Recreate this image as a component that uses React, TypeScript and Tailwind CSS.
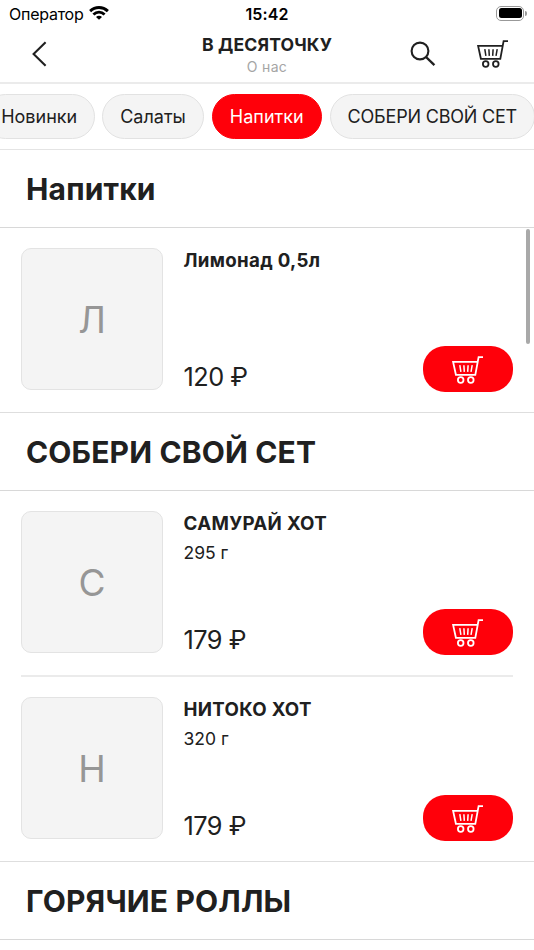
import { clsx } from 'clsx';

type Product = { name: string; weight?: string; price: string };
type Section = { title: string; products: Product[] };

const categories = ['Новинки', 'Салаты', 'Напитки', 'СОБЕРИ СВОЙ СЕТ'];

const sections: Section[] = [
  { title: 'Напитки', products: [{ name: 'Лимонад 0,5л', price: '120 ₽' }] },
  {
    title: 'СОБЕРИ СВОЙ СЕТ',
    products: [
      { name: 'САМУРАЙ ХОТ', weight: '295 г', price: '179 ₽' },
      { name: 'НИТОКО ХОТ', weight: '320 г', price: '179 ₽' },
    ],
  },
  { title: 'ГОРЯЧИЕ РОЛЛЫ', products: [] },
];

function CartIcon({ className }: { className?: string }) {
  return (
    <svg className={className} viewBox="0 0 32 28" fill="none" stroke="currentColor" strokeWidth="1.8">
      <path d="M31 1.2H26.6L23.3 18.8H3.9L1.1 5.9H25.6" />
      <path d="M7.8 9.2L8.9 15.9M11.9 9.2L12.3 15.9M16.1 9.2L15.7 15.9M20.2 9.2L19 15.9" strokeWidth="1.5" />
      <circle cx="8.7" cy="24" r="2.8" />
      <circle cx="18.8" cy="24" r="2.8" />
    </svg>
  );
}

function StatusBar() {
  return (
    <div className="grid h-[28px] grid-cols-3 items-center text-[16px] text-black">
      <div className="flex items-center gap-[6px] pl-[9px]">
        <span className="tracking-[-0.25px]">Оператор</span>
        <svg className="h-[14px] w-5 -translate-y-px" viewBox="0 0 20 14" fill="none" stroke="black" strokeWidth="2.9">
          <path d="M1.1 5.1C6.2.3 13.8.3 18.9 5.1" />
          <path d="M4.4 8.5C7.7 5.5 12.3 5.5 15.6 8.5" />
          <path d="M10 13.8L7 10.9C8.7 9.4 11.3 9.4 13 10.9Z" fill="black" stroke="none" />
        </svg>
      </div>
      <span className="text-center font-semibold tracking-[0.1px]">15:42</span>
      <div className="flex items-center justify-end pr-[7px]">
        <div className="-mt-[2px] h-[15px] w-[28px] rounded-[5px] border border-[#999] p-[1.5px]">
          <div className="h-full rounded-[2.5px] bg-black" />
        </div>
        <div className="-mt-[2px] ml-px h-[5px] w-[2px] rounded-r-full bg-[#999]" />
      </div>
    </div>
  );
}

function Header() {
  return (
    <header className="grid h-[56px] grid-cols-3 border-b-2 border-[#ebebeb]">
      <div className="pt-[13px] pl-[31px]">
        <svg className="h-[26px] w-4" viewBox="0 0 16 26" fill="none" stroke="#202020" strokeWidth="2.1">
          <path d="M14.6 1.2L2.6 13L14.6 24.8" />
        </svg>
      </div>
      <div className="flex flex-col items-center whitespace-nowrap">
        <h1 className="mt-[6px] text-[17.6px] leading-[22px] font-bold tracking-[0.15px]">В ДЕСЯТОЧКУ</h1>
        <span className="mt-[2px] text-[14px] leading-[18px] tracking-[0.3px] text-[#a5a5a5]">О нас</span>
      </div>
      <div className="flex justify-end gap-[41px] pt-[12px] pr-[25px]">
        <svg className="mt-px h-[26px] w-[26px]" viewBox="0 0 26 26" fill="none" stroke="#202020" strokeWidth="2.1">
          <circle cx="10" cy="10" r="8.4" />
          <path d="M16 16L24.4 24.2" strokeWidth="2.4" />
        </svg>
        <CartIcon className="h-7 w-8 text-[#202020]" />
      </div>
    </header>
  );
}

function Categories() {
  return (
    <nav className="flex h-[66px] justify-end gap-2 overflow-hidden border-b-[1.5px] border-[#e4e4e4] pt-[10px]">
      {categories.map((name) => (
        <button
          key={name}
          className={clsx(
            'h-[45px] shrink-0 rounded-full border px-[17px] text-[18px] whitespace-nowrap first:-mr-px last:-mr-px last:tracking-[-0.2px]',
            name === 'Напитки' ? 'border-[#ff000a] bg-[#ff000a] text-white' : 'border-[#e2e2e2] bg-[#f4f4f4]',
          )}
        >
          {name}
        </button>
      ))}
    </nav>
  );
}

function ProductRow({ product, last }: { product: Product; last: boolean }) {
  return (
    <article className={clsx('mx-[21px] flex pt-5', last ? 'h-[184px]' : 'h-[186px] border-b-2 border-[#ebebeb]')}>
      <div className="flex size-[142px] shrink-0 items-center justify-center rounded-[10px] border border-[#e3e3e3] bg-[#f4f4f4] pt-px text-[37px] text-[#969696]">
        {product.name[0]}
      </div>
      <div className="ml-[20.5px] flex h-[145px] flex-1 flex-col pt-px">
        <h3 className="text-[18.7px] leading-[24px] font-bold tracking-[0.32px]">{product.name}</h3>
        {product.weight && <p className="mt-[6px] text-[17.5px] leading-[22px]">{product.weight}</p>}
        <span className="mt-auto text-[25.3px] leading-[32px] tracking-[-0.5px]">{product.price}</span>
      </div>
      <button className="mt-[98px] flex h-[46px] w-[90px] justify-center rounded-[22px] bg-[#ff000a] pt-[10px] text-white">
        <CartIcon className="h-7 w-8" />
      </button>
    </article>
  );
}

export default function App() {
  return (
    <main className="relative h-[950px] w-[534px] overflow-hidden bg-white font-['Inter',sans-serif] text-[#202020]">
      <StatusBar />
      <Header />
      <Categories />
      {sections.map((section) => (
        <section key={section.title}>
          <h2 className="flex h-[78px] items-center border-b border-[#d8d8d8] pt-px pl-[26px] text-[30px] font-bold tracking-[0.15px]">
            {section.title}
          </h2>
          {section.products.length > 0 && (
            <div className="border-b border-[#dedede]">
              {section.products.map((product, i) => (
                <ProductRow key={product.name} product={product} last={i === section.products.length - 1} />
              ))}
            </div>
          )}
        </section>
      ))}
      {/* scroll indicator */}
      <div className="absolute top-[229px] right-1 h-[115px] w-1 rounded-full bg-[#a9a9a9]" />
    </main>
  );
}
